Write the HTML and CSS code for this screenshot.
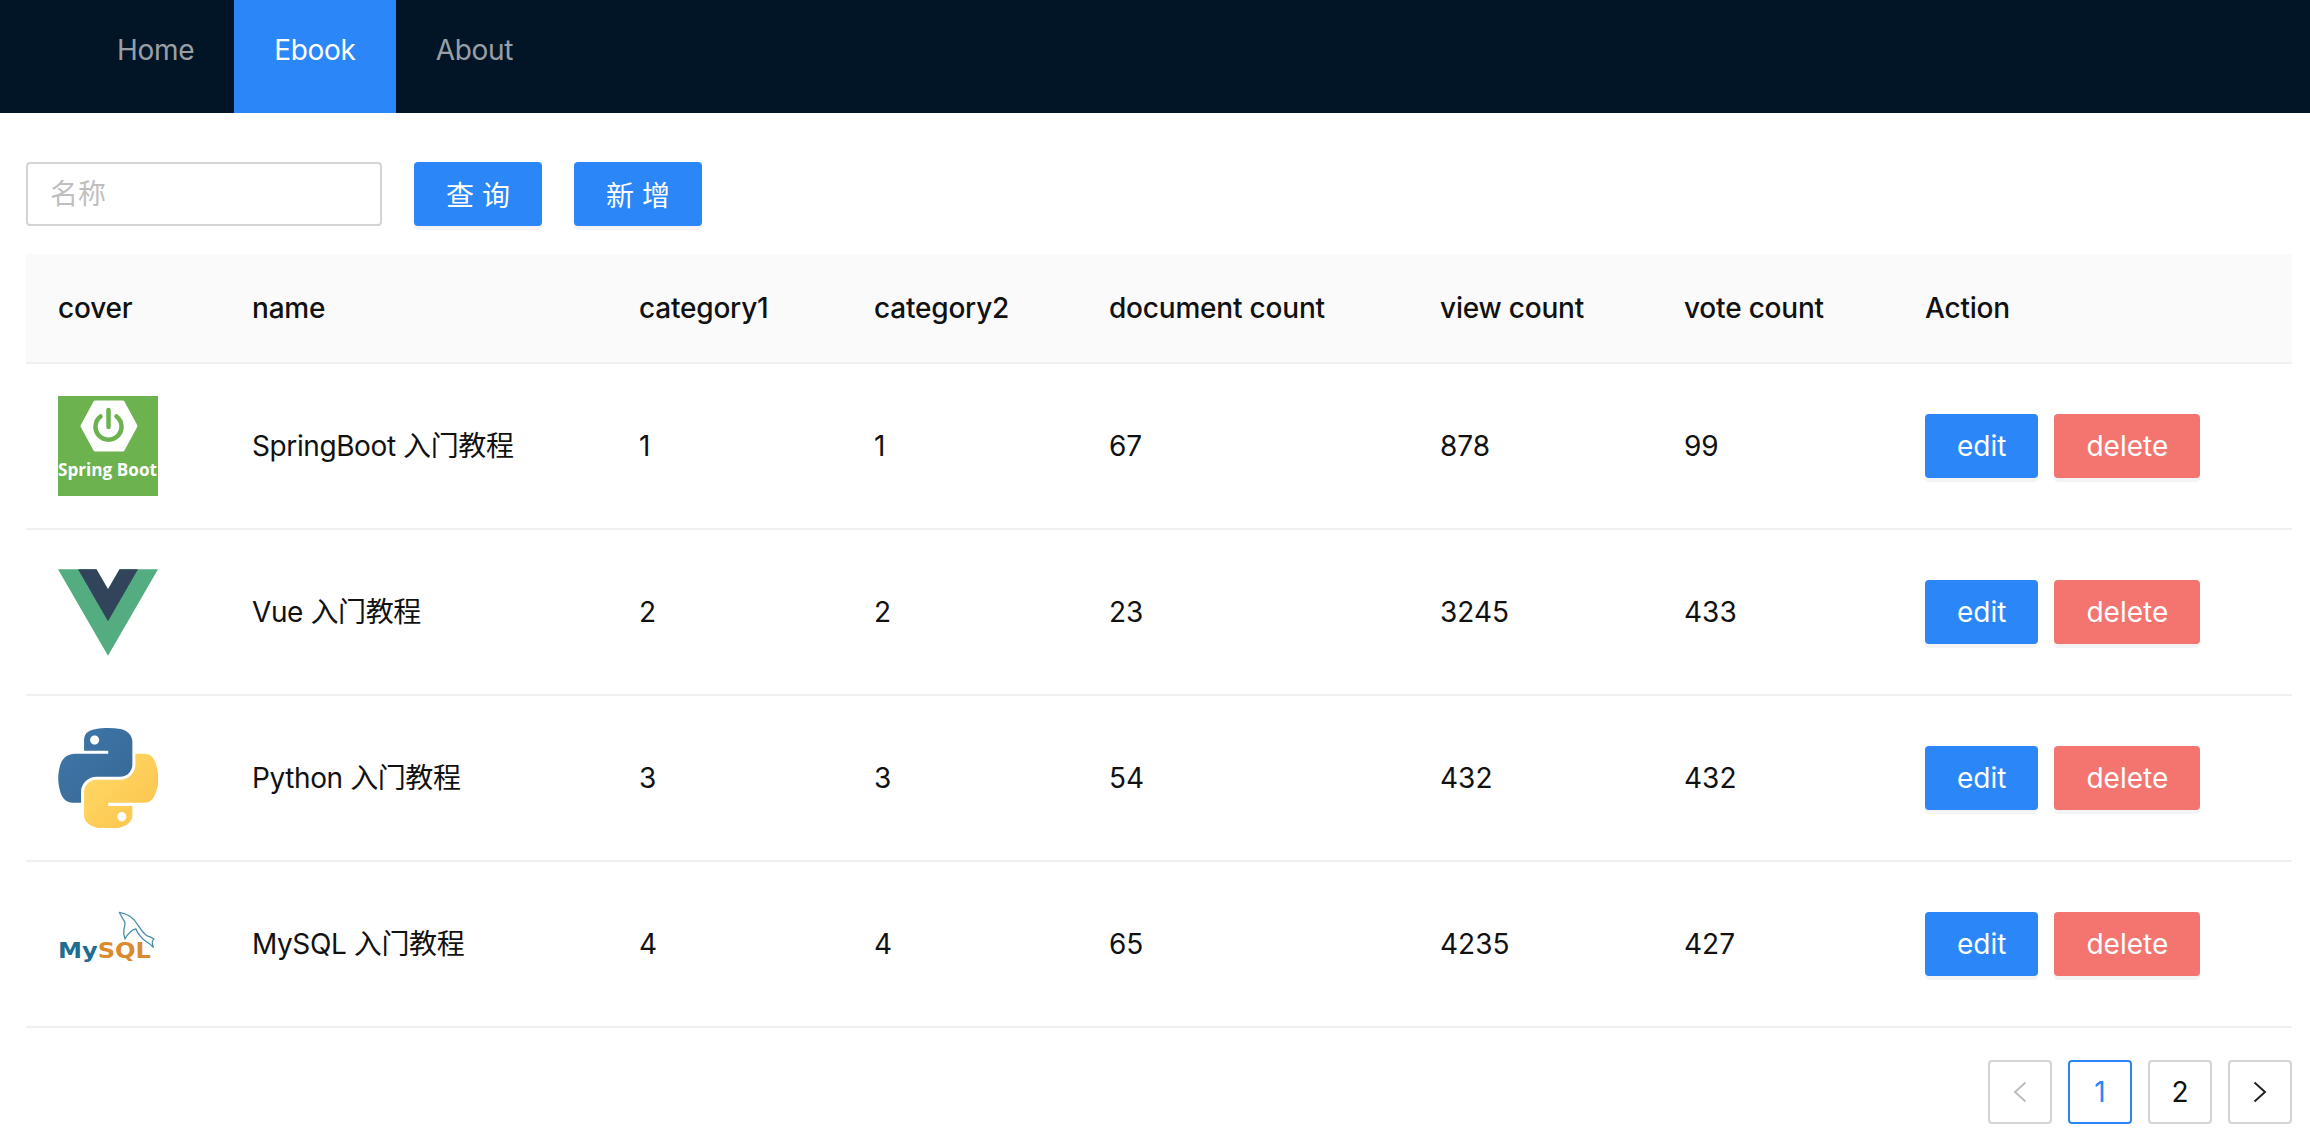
FILE: index.html
```html
<!DOCTYPE html>
<html lang="en">
<head>
    <meta charset="UTF-8">
    <title>Ebook</title>
    <link rel="stylesheet" href="styles.css">
</head>
<body>
    <header class="top-nav">
        <a class="nav-item">Home</a>
        <a class="nav-item active">Ebook</a>
        <a class="nav-item">About</a>
    </header>

    <main class="content">
        <div class="toolbar">
            <input class="search-input" type="text" placeholder="名称">
            <button class="btn btn-primary btn-wide">查 询</button>
            <button class="btn btn-primary btn-wide">新 增</button>
        </div>

        <table class="ebook-table">
            <colgroup>
                <col class="col-cover">
                <col class="col-name">
                <col class="col-cat">
                <col class="col-cat">
                <col class="col-doc">
                <col class="col-view">
                <col class="col-vote">
                <col class="col-action">
            </colgroup>
            <thead>
                <tr>
                    <th>cover</th>
                    <th>name</th>
                    <th>category1</th>
                    <th>category2</th>
                    <th>document count</th>
                    <th>view count</th>
                    <th>vote count</th>
                    <th>Action</th>
                </tr>
            </thead>
            <tbody>
                <tr>
                    <td>
                        <svg class="cover" viewBox="0 0 100 100">
                            <rect width="100" height="100" fill="#6cb24e"/>
                            <polygon points="24,30 37,6 65,6 78,30 65,54 37,54" fill="#fff" stroke="#fff" stroke-width="3" stroke-linejoin="round"/>
                            <path d="M42.5 20.5a13 13 0 1 0 16 0" fill="none" stroke="#6cb24e" stroke-width="4.5" stroke-linecap="round"/>
                            <path d="M50.500 14v17" fill="none" stroke="#6cb24e" stroke-width="4.5" stroke-linecap="round"/>
                            <text class="spring-text" x="0" y="80" textLength="99" lengthAdjust="spacingAndGlyphs">Spring Boot</text>
                        </svg>
                    </td>
                    <td class="name-cell">SpringBoot 入门教程</td>
                    <td>1</td>
                    <td>1</td>
                    <td>67</td>
                    <td>878</td>
                    <td>99</td>
                    <td>
                        <div class="actions">
                            <button class="btn btn-primary">edit</button>
                            <button class="btn btn-danger">delete</button>
                        </div>
                    </td>
                </tr>
                <tr>
                    <td>
                        <svg class="cover" viewBox="0 -19 261.76 261.76">
                            <path d="M161.096.001l-30.225 52.351L100.647.001H-.005l130.877 226.688L261.749.001z" fill="#53ad80"/>
                            <path d="M161.096.001l-30.225 52.351L100.647.001H52.346l78.526 136.01L209.398.001z" fill="#31445a"/>
                        </svg>
                    </td>
                    <td class="name-cell">Vue 入门教程</td>
                    <td>2</td>
                    <td>2</td>
                    <td>23</td>
                    <td>3245</td>
                    <td>433</td>
                    <td>
                        <div class="actions">
                            <button class="btn btn-primary">edit</button>
                            <button class="btn btn-danger">delete</button>
                        </div>
                    </td>
                </tr>
                <tr>
                    <td>
                        <svg class="cover" viewBox="0 0 110.500 111">
                            <defs>
                                <linearGradient id="py-blue" x1="0" y1="0" x2="1" y2="1">
                                    <stop offset="0" stop-color="#3f78aa"/>
                                    <stop offset="1" stop-color="#366794"/>
                                </linearGradient>
                                <linearGradient id="py-yellow" x1="0" y1="0" x2="1" y2="1">
                                    <stop offset="0" stop-color="#ffdc68"/>
                                    <stop offset="1" stop-color="#fbc24a"/>
                                </linearGradient>
                            </defs>
                            <path fill="url(#py-blue)" d="M54.919 0C50.335.02 45.958.411 42.106 1.093 30.76 3.097 28.7 7.294 28.7 15.032V25.25h26.813v3.406H18.638c-7.793 0-14.616 4.684-16.75 13.594-2.462 10.213-2.571 16.586 0 27.25 1.906 7.938 6.458 13.594 14.25 13.594h9.219v-12.25c0-8.85 7.657-16.656 16.75-16.656h26.781c7.455 0 13.406-6.138 13.406-13.625V15.03c0-7.266-6.13-12.725-13.406-13.937C64.282.328 59.502-.02 54.918 0zM40.419 8.22c2.77 0 5.031 2.299 5.031 5.125 0 2.816-2.262 5.094-5.031 5.094-2.78 0-5.031-2.278-5.031-5.094 0-2.826 2.252-5.125 5.031-5.125z"/>
                            <path fill="url(#py-yellow)" d="M85.638 28.657v11.906c0 9.231-7.826 17-16.75 17H42.106c-7.336 0-13.406 6.278-13.406 13.625v25.531c0 7.266 6.319 11.54 13.406 13.625 8.487 2.496 16.626 2.947 26.781 0 6.75-1.954 13.406-5.888 13.406-13.625V86.5H55.513v-3.405h40.187c7.793 0 10.696-5.436 13.406-13.594 2.8-8.399 2.68-16.476 0-27.25-1.926-7.757-5.604-13.594-13.406-13.594zM70.575 93.313c2.78 0 5.031 2.278 5.031 5.094 0 2.826-2.252 5.125-5.031 5.125-2.77 0-5.031-2.299-5.031-5.125 0-2.816 2.262-5.094 5.031-5.094z"/>
                        </svg>
                    </td>
                    <td class="name-cell">Python 入门教程</td>
                    <td>3</td>
                    <td>3</td>
                    <td>54</td>
                    <td>432</td>
                    <td>432</td>
                    <td>
                        <div class="actions">
                            <button class="btn btn-primary">edit</button>
                            <button class="btn btn-danger">delete</button>
                        </div>
                    </td>
                </tr>
                <tr>
                    <td>
                        <svg class="cover" viewBox="0 0 100 100">
                            <path d="M61.300 18.300Q67 19 72 22.300Q77 26 80.300 31.700Q84 38 88.700 41.700Q93 43 96 45Q93 47 95.300 53.300Q92 50 89.300 48.300Q85 46 82 41.700Q79 38 78 35Q75 35 72 38.300Q69 41 67 45Q65 40 66 35Q67 32 67 28.300Q64 24 61.300 18.300Z" fill="none" stroke="#4a8fa8" stroke-width="1.300" stroke-linejoin="round"/>
                            <text class="mysql-text" x="0" y="64" textLength="93" lengthAdjust="spacingAndGlyphs"><tspan class="mysql-my">My</tspan><tspan class="mysql-sql">SQL</tspan></text>
                        </svg>
                    </td>
                    <td class="name-cell">MySQL 入门教程</td>
                    <td>4</td>
                    <td>4</td>
                    <td>65</td>
                    <td>4235</td>
                    <td>427</td>
                    <td>
                        <div class="actions">
                            <button class="btn btn-primary">edit</button>
                            <button class="btn btn-danger">delete</button>
                        </div>
                    </td>
                </tr>
            </tbody>
        </table>

        <div class="pagination">
            <a class="page-item disabled">
                <svg class="page-arrow" viewBox="0 0 14 22"><path d="M12.500 1.500L2 11l10.500 9.500"/></svg>
            </a>
            <a class="page-item current">1</a>
            <a class="page-item">2</a>
            <a class="page-item">
                <svg class="page-arrow" viewBox="0 0 14 22"><path d="M1.500 1.500L12 11 1.500 20.500"/></svg>
            </a>
        </div>
    </main>
</body>
</html>
```

FILE: styles.css
```css
body {
    margin: 0;
    background-color: #fff;
    color: #111;
    font-family: Inter, "Noto Sans CJK SC", sans-serif;
    font-size: 28px;
    line-height: 1.5;
}

/* Top navigation */
.top-nav {
    display: flex;
    height: 113px;
    padding-left: 77px;
    background-color: #021526;
}

.nav-item {
    display: flex;
    align-items: center;
    box-sizing: border-box;
    height: 100%;
    padding: 0 40px 13px;
    color: rgba(255, 255, 255, 0.6);
    letter-spacing: -0.3px;
}

.nav-item.active {
    background-color: #2b87f8;
    color: #fff;
}

.content {
    padding: 49px 18px 0 26px;
}

/* Search row */
.toolbar {
    display: flex;
    gap: 32px;
    margin-bottom: 28px;
}

.search-input {
    box-sizing: border-box;
    width: 356px;
    height: 64px;
    padding: 0 22px;
    border: 2px solid #d4d4d4;
    border-radius: 4px;
    font-family: inherit;
    font-size: 28px;
}

.search-input::placeholder {
    color: #bfbfbf;
}

.btn {
    box-sizing: border-box;
    height: 64px;
    padding: 0 32px;
    border: none;
    border-radius: 4px;
    box-shadow: 0 4px 0 rgba(0, 0, 0, 0.045);
    color: #fff;
    font-family: inherit;
    font-size: 28px;
}

.btn-wide {
    width: 128px;
    padding: 0;
}

.btn-primary {
    background-color: #2b87f8;
}

.btn-danger {
    background-color: #f4756f;
}

/* Table */
.ebook-table {
    width: 100%;
    table-layout: fixed;
    border-collapse: collapse;
}

.col-cover { width: 194px; }
.col-name { width: 387px; }
.col-cat { width: 235px; }
.col-doc { width: 331px; }
.col-view { width: 244px; }
.col-vote { width: 241px; }

.ebook-table th {
    height: 108px;
    padding: 0 32px;
    border-bottom: 2px solid #f0f0f0;
    background-color: #fafafa;
    font-weight: 500;
    letter-spacing: -0.2px;
    text-align: left;
}

.ebook-table td {
    height: 164px;
    padding: 0 32px;
    border-bottom: 2px solid #f0f0f0;
}

.ebook-table td.name-cell {
    letter-spacing: -0.4px;
}

.cover {
    display: block;
    width: 100px;
    height: 100px;
}

.spring-text {
    fill: #fff;
    font-family: "Open Sans", sans-serif;
    font-size: 18px;
    font-weight: 700;
}

.mysql-text {
    font-family: "DejaVu Sans", sans-serif;
    font-size: 21.500px;
    font-weight: 700;
}

.mysql-my {
    fill: #1f6e8f;
}

.mysql-sql {
    fill: #dc8a2f;
}

.actions {
    display: flex;
    gap: 16px;
}

/* Pagination */
.pagination {
    display: flex;
    justify-content: flex-end;
    gap: 16px;
    margin-top: 32px;
}

.page-item {
    display: flex;
    align-items: center;
    justify-content: center;
    box-sizing: border-box;
    width: 64px;
    height: 64px;
    border: 2px solid #d4d4d4;
    border-radius: 4px;
}

.page-item.current {
    border-color: #2b87f8;
    color: #2b87f8;
}

.page-arrow {
    width: 14px;
    height: 22px;
    fill: none;
    stroke: #222;
    stroke-width: 2;
}

.page-item.disabled .page-arrow {
    stroke: #bdbdbd;
}
```
